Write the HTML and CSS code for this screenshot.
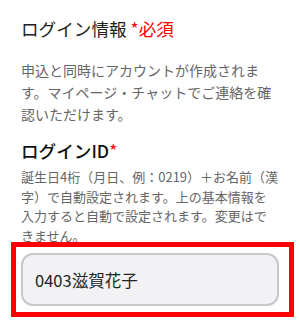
FILE: index.html
```html
<!DOCTYPE html>
<html lang="ja">
<head>
  <meta charset="UTF-8">
  <meta name="viewport" content="width=device-width, initial-scale=1">
  <title>ログイン情報</title>
  <link rel="stylesheet" href="styles.css">
</head>
<body>

<div class="section">
  <h2 class="section-title">ログイン情報 <span class="req">*必須</span></h2>
  <p class="lead">申込と同時にアカウントが作成されます。マイページ・チャットでご連絡を確認いただけます。</p>

  <h3 class="field-label">ログインID<span class="req">*</span></h3>
  <p class="note">誕生日4桁（月日、例：0219）＋お名前（漢字）で自動設定されます。上の基本情報を入力すると自動で設定されます。変更はできません。</p>

  <!-- highlighted field -->
  <div class="highlight">
    <input class="field" type="text" value="0403滋賀花子" readonly>
  </div>
</div>

</body>
</html>
```

FILE: styles.css
```css
* { margin: 0; padding: 0; box-sizing: border-box; font-family: 'Noto Sans CJK JP', 'Noto Sans', sans-serif; }
body, html { width: 100%; height: 100%; background: #fff; }

.section { padding: 16px 21px 0 21px; }
.section-title { font-size: 17.6px; font-weight: 400; line-height: 26px; color: #222; }
.req { color: #f00; font-weight: 400; }

.lead { margin-top: 17px; font-size: 14px; line-height: 22px; color: #666; }

.field-label { margin-top: 13px; font-size: 17.6px; font-weight: 500; line-height: 26px; color: #111; }
.note { margin-top: 3px; font-size: 13px; line-height: 19.5px; color: #666; }

/* red annotation box drawn over the text above */
.highlight { position: relative; background: #fff; border: 5px solid #f00; margin: -3px -15px 0 -10px; padding: 6px 10px 6px 5px; }
.field { display: block; width: 100%; height: 53px; padding: 0 12px; border: 2px solid #c6c6cb; border-radius: 12px; background: #f2f2f4; font-size: 16.5px; color: #222; outline: none; }
```
